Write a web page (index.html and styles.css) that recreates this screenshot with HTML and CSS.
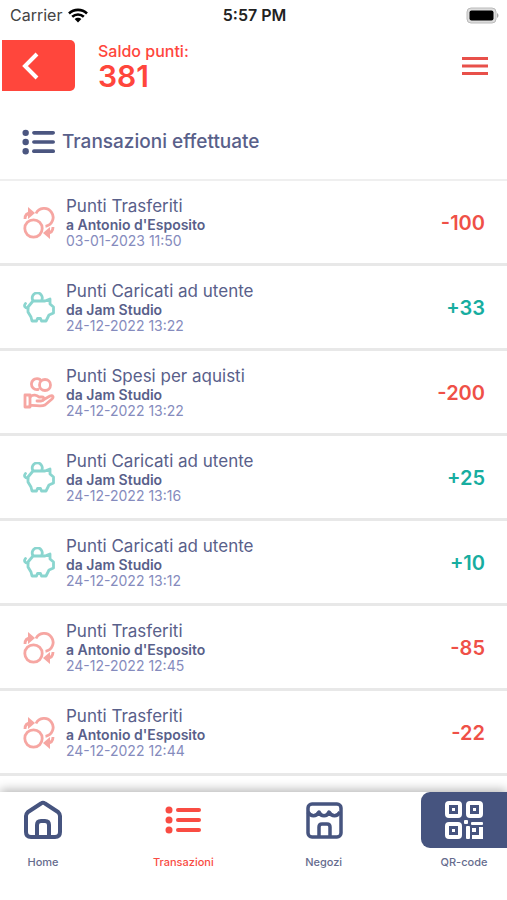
FILE: index.html
```html
<!DOCTYPE html>
<html lang="it">
<head>
<meta charset="UTF-8">
<meta name="viewport" content="width=device-width, initial-scale=1.0">
<title>Transazioni effettuate</title>
<link rel="stylesheet" href="styles.css">
</head>
<body>

<!-- Shared icons -->
<svg class="sprite" aria-hidden="true">
    <symbol id="list" viewBox="0 0 36 28">
        <g fill="currentColor">
            <circle cx="4" cy="4" r="3.5"/><circle cx="4" cy="14" r="3.5"/><circle cx="4" cy="24" r="3.5"/>
            <rect x="11" y="2" width="25" height="4" rx="2"/><rect x="11" y="12" width="25" height="4" rx="2"/><rect x="11" y="22" width="25" height="4" rx="2"/>
        </g>
    </symbol>
    <symbol id="transfer" viewBox="0 0 32 32">
        <g fill="none" stroke="currentColor" stroke-width="2.8">
            <circle cx="10.5" cy="21.5" r="8.7"/>
            <path d="M13 6.5A9 9 0 1 1 22.5 19.300"/>
            <path d="M2 12C2 8 4 6 8 6"/>
            <path d="M30 20C30 24 28 26 24 26"/>
        </g>
        <path fill="currentColor" d="M5 0l7 6-7 6zM27 20v12l-7-6z"/>
    </symbol>
    <symbol id="piggy" viewBox="0 0 32 32">
        <g fill="none" stroke="currentColor" stroke-width="2.800" stroke-linejoin="round" stroke-linecap="round">
            <path d="M10 9H22L27 7V12L30.500 15V21L26 23L23 29H18.500L17.500 26.500H14.500L13.500 29H9L8 25L5 20V15Z"/>
            <path d="M10 8.500A5 5 0 1 1 19 7.500"/>
            <path d="M5 16C2 16 0.500 14 2.500 11.500"/>
        </g>
    </symbol>
    <symbol id="spend" viewBox="0 0 32 32">
        <g fill="none" stroke="currentColor" stroke-width="2.800" stroke-linejoin="round" stroke-linecap="round">
            <path d="M15 12.500A5.500 5.500 0 1 1 17 2.500"/>
            <circle cx="22" cy="8" r="5.500"/>
            <path d="M2 18H7V30H2Z"/>
            <path d="M7 20C10 17 14 18 16 20H19C22 20 21 24 18 24H14"/>
            <path d="M20 23L27 19C30 18 31 20 29 22L22 28C18 30 13 28 7 28.500"/>
        </g>
    </symbol>
</svg>

<div class="app">
    <div class="status-bar">
        <div class="carrier">
            Carrier
            <svg width="20" height="15" viewBox="0 0 20 15" aria-hidden="true">
                <g fill="none" stroke="#000" stroke-width="2.600">
                    <path d="M1 5.500C6 0.700 14 0.700 19 5.500"/>
                    <path d="M4.200 8.800C7.500 5.700 12.500 5.700 15.800 8.800"/>
                </g>
                <path d="M6.600 11C8.500 9.200 11.500 9.200 13.400 11L10 14.500Z"/>
            </svg>
        </div>
        <div class="time">5:57 PM</div>
        <div class="battery">
            <svg width="33" height="17" viewBox="0 0 33 17" aria-hidden="true">
                <rect x="1" y="1" width="29" height="15" rx="4" fill="#ddd" stroke="#bbb"/>
                <rect x="3.500" y="3.500" width="24" height="10" rx="2"/>
                <path fill="#aaa" d="M31 6C33 7 33 10 31 11Z"/>
            </svg>
        </div>
    </div>

    <header class="header">
        <button class="back" type="button" aria-label="Indietro">
            <svg width="18" height="28" viewBox="0 0 18 28" aria-hidden="true">
                <path d="M15 2L3 14L15 26" fill="none" stroke="#fff" stroke-width="4"/>
            </svg>
        </button>
        <div class="balance">
            <div class="balance-label">Saldo punti:</div>
            <div class="balance-value">381</div>
        </div>
        <button class="menu" type="button" aria-label="Menu">
            <svg width="26" height="18" viewBox="0 0 26 18" aria-hidden="true">
                <path d="M0 1.500H26M0 9H26M0 16.500H26" stroke="currentColor" stroke-width="3"/>
            </svg>
        </button>
    </header>

    <h1 class="title">
        <svg width="33" height="26" aria-hidden="true"><use href="#list"/></svg>
        Transazioni effettuate
    </h1>

    <ul class="transactions">
        <li class="transaction minus">
            <svg class="icon" aria-hidden="true"><use href="#transfer"/></svg>
            <div class="info">
                <div class="type">Punti Trasferiti</div>
                <div class="who">a Antonio d'Esposito</div>
                <div class="date">03-01-2023 11:50</div>
            </div>
            <div class="points">-100</div>
        </li>
        <li class="transaction plus">
            <svg class="icon" aria-hidden="true"><use href="#piggy"/></svg>
            <div class="info">
                <div class="type">Punti Caricati ad utente</div>
                <div class="who">da Jam Studio</div>
                <div class="date">24-12-2022 13:22</div>
            </div>
            <div class="points">+33</div>
        </li>
        <li class="transaction minus">
            <svg class="icon" aria-hidden="true"><use href="#spend"/></svg>
            <div class="info">
                <div class="type">Punti Spesi per aquisti</div>
                <div class="who">da Jam Studio</div>
                <div class="date">24-12-2022 13:22</div>
            </div>
            <div class="points">-200</div>
        </li>
        <li class="transaction plus">
            <svg class="icon" aria-hidden="true"><use href="#piggy"/></svg>
            <div class="info">
                <div class="type">Punti Caricati ad utente</div>
                <div class="who">da Jam Studio</div>
                <div class="date">24-12-2022 13:16</div>
            </div>
            <div class="points">+25</div>
        </li>
        <li class="transaction plus">
            <svg class="icon" aria-hidden="true"><use href="#piggy"/></svg>
            <div class="info">
                <div class="type">Punti Caricati ad utente</div>
                <div class="who">da Jam Studio</div>
                <div class="date">24-12-2022 13:12</div>
            </div>
            <div class="points">+10</div>
        </li>
        <li class="transaction minus">
            <svg class="icon" aria-hidden="true"><use href="#transfer"/></svg>
            <div class="info">
                <div class="type">Punti Trasferiti</div>
                <div class="who">a Antonio d'Esposito</div>
                <div class="date">24-12-2022 12:45</div>
            </div>
            <div class="points">-85</div>
        </li>
        <li class="transaction minus">
            <svg class="icon" aria-hidden="true"><use href="#transfer"/></svg>
            <div class="info">
                <div class="type">Punti Trasferiti</div>
                <div class="who">a Antonio d'Esposito</div>
                <div class="date">24-12-2022 12:44</div>
            </div>
            <div class="points">-22</div>
        </li>
    </ul>

    <nav class="tabs">
        <a class="tab" href="#home">
            <span class="tab-icon">
                <svg width="40" height="40" viewBox="0 0 40 40" aria-hidden="true">
                    <g fill="none" stroke="currentColor" stroke-width="4" stroke-linejoin="round">
                        <path d="M3 16Q3 14 5 12L18 3.500Q20 2 22 3.500L35 12Q37 14 37 16V32Q37 37 32 37H8Q3 37 3 32Z"/>
                        <path d="M14 37V25Q14 21 18 21H22Q26 21 26 25V37"/>
                    </g>
                </svg>
            </span>
            Home
        </a>
        <a class="tab active" href="#transazioni">
            <span class="tab-icon">
                <svg width="36" height="28" aria-hidden="true"><use href="#list"/></svg>
            </span>
            Transazioni
        </a>
        <a class="tab" href="#negozi">
            <span class="tab-icon">
                <svg width="40" height="40" viewBox="0 0 40 40" aria-hidden="true">
                    <g fill="none" stroke="currentColor" stroke-width="3.500" stroke-linejoin="round">
                        <rect x="4" y="4" width="33" height="33" rx="4"/>
                        <path d="M4 12C7 17 12 17 15 12C17 17 23 17 25 12C28 17 33 17 36 12"/>
                        <path d="M15 36V27Q15 24 18 24H23Q26 24 26 27V36"/>
                    </g>
                </svg>
            </span>
            Negozi
        </a>
        <a class="tab qr" href="#qr-code">
            <span class="tab-icon">
                <svg width="40" height="40" viewBox="0 0 40 40" aria-hidden="true">
                    <g fill="none" stroke="currentColor" stroke-width="4">
                        <rect x="3" y="3" width="13" height="13" rx="2"/>
                        <rect x="24" y="3" width="13" height="13" rx="2"/>
                        <rect x="3" y="24" width="13" height="13" rx="2"/>
                    </g>
                    <g fill="currentColor">
                        <rect x="8" y="8" width="3" height="3"/><rect x="29" y="8" width="3" height="3"/><rect x="8" y="29" width="3" height="3"/>
                        <rect x="20" y="20" width="4" height="4" rx="1"/>
                        <rect x="27" y="22" width="12" height="3" rx="1"/>
                        <rect x="22" y="26" width="4" height="13" rx="1"/>
                        <path d="M28 28H32V32H28ZM35 27H39V39H28V35H35Z"/>
                    </g>
                </svg>
            </span>
            QR-code
        </a>
    </nav>
</div>

</body>
</html>
```

FILE: styles.css
```css
* {
    box-sizing: border-box;
}
body {
    margin: 0;
    font-family: Inter, "Liberation Sans", sans-serif;
    font-weight: 500;
    color: #59608a;
    background-color: #fff;
}
button {
    border: 0;
    padding: 0;
    background: none;
    cursor: pointer;
}
svg {
    display: block;
}
.sprite {
    display: none;
}
.app {
    display: flex;
    flex-direction: column;
    min-height: 100vh;
}

/* Status bar */
.status-bar {
    display: grid;
    grid-template-columns: 1fr auto 1fr;
    align-items: center;
    padding: 5px 8px 5px 10px;
    font-size: 16px;
    line-height: 20px;
    color: #222;
}
.carrier {
    display: flex;
    align-items: center;
    gap: 6px;
    font-weight: 400;
    color: #444;
}
.time {
    font-weight: 600;
}
.battery {
    justify-self: end;
}

/* Header */
.header {
    display: flex;
    align-items: center;
    padding: 10px 19px 12px 2px;
    color: #ff463c;
}
.back {
    display: flex;
    align-items: center;
    width: 73px;
    height: 51px;
    padding-left: 20px;
    border-radius: 0 5px 5px 0;
    background-color: #ff463c;
}
.balance {
    flex: 1;
    padding-left: 23px;
}
.balance-label {
    font-size: 16px;
    line-height: 20px;
}
.balance-value {
    font-size: 30px;
    font-weight: 600;
    line-height: 30px;
}
.menu {
    color: #e8504a;
}

/* Transactions */
.title {
    display: flex;
    align-items: center;
    gap: 7px;
    margin: 0;
    padding: 25px 22px 24px;
    font-size: 19px;
    font-weight: 500;
    line-height: 27px;
    border-bottom: 2px solid #efefef;
}
.title svg {
    color: #4b5680;
}
.transactions {
    flex: 1;
    margin: 0;
    padding: 0;
    list-style: none;
}
.transaction {
    display: flex;
    align-items: center;
    gap: 11px;
    padding: 15px 22px 14px 23px;
    border-bottom: 3px solid #e8e8e8;
}
.icon {
    width: 32px;
    height: 32px;
    opacity: 0.5;
}
.info {
    flex: 1;
}
.type {
    font-size: 17px;
    font-weight: 400;
    line-height: 20px;
}
.who {
    font-size: 14px;
    font-weight: 600;
    line-height: 17px;
}
.date {
    font-size: 14px;
    font-weight: 400;
    line-height: 16px;
    color: #858bbd;
}
.points {
    font-size: 20px;
    font-weight: 600;
}
.minus .icon,
.minus .points {
    color: #ef5047;
}
.plus .icon,
.plus .points {
    color: #17ada0;
}

/* Bottom tabs */
.tabs {
    display: flex;
    justify-content: space-between;
    min-height: 108px;
    background-color: #fff;
    box-shadow: 0 -2px 10px rgba(0, 0, 0, 0.3);
}
.tab {
    display: flex;
    flex-direction: column;
    align-items: center;
    gap: 6px;
    width: 86px;
    font-size: 11px;
    line-height: 16px;
    color: #666c8e;
    text-decoration: none;
}
.tab-icon {
    display: flex;
    align-items: center;
    justify-content: center;
    width: 100%;
    height: 56px;
    color: #46547f;
}
.active,
.active .tab-icon {
    color: #f94c43;
}
.qr .tab-icon {
    color: #fff;
    background-color: #46547f;
    border-radius: 9px 0 0 9px;
}
```
